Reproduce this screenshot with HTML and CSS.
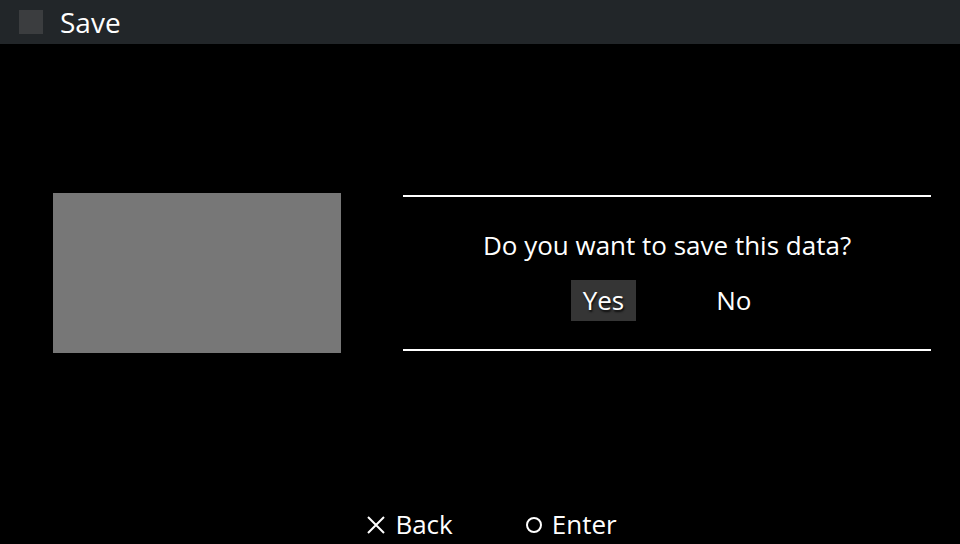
FILE: index.html
```html
<!DOCTYPE html>
<html>

<head>
    <meta charset="UTF-8">
    <meta name="viewport" content="width=device-width, initial-scale=1.0">
    <title>Save</title>
    <link rel="stylesheet" href="styles.css">
</head>

<body>
    <div class="header">
        <span class="header-icon"></span>
        <span class="header-title">Save</span>
    </div>

    <div class="content">
        <div class="thumbnail"></div>

        <div class="dialog">
            <div class="question">Do you want to save this data?</div>
            <div class="choices">
                <span class="choice selected">Yes</span>
                <span class="choice">No</span>
            </div>
        </div>
    </div>

    <div class="footer">
        <span class="hint">
            <svg class="glyph" width="20" height="20" viewBox="0 0 20 20">
                <path d="M2 2 L18 18 M18 2 L2 18" stroke="#fff" stroke-width="2" fill="none" />
            </svg>
            Back
        </span>
        <span class="hint">
            <svg class="glyph" width="18" height="18" viewBox="0 0 18 18">
                <circle cx="9" cy="9" r="7" stroke="#fff" stroke-width="2" fill="none" />
            </svg>
            Enter
        </span>
    </div>
</body>

</html>
```

FILE: styles.css
```css
html, body {
    height: 100%;
}

body {
    margin: 0;
    padding: 0;
    background-color: #000;
    color: #fff;
    font-family: 'Open Sans', 'DejaVu Sans', sans-serif;
    display: flex;
    flex-direction: column;
    overflow: hidden;
}

.header {
    height: 44px;
    background-color: #222629;
    display: flex;
    align-items: center;
    padding-left: 19px;
}

.header-icon {
    width: 24px;
    height: 24px;
    background-color: #3b3d3f;
    margin-right: 17px;
}

.header-title {
    font-size: 28px;
    line-height: 44px;
}

.content {
    display: flex;
    align-items: center;
    padding-top: 149px;
    padding-left: 53px;
    gap: 62px;
}

.thumbnail {
    width: 288px;
    height: 160px;
    background-color: #777;
}

.dialog {
    width: 528px;
    height: 152px;
    border-top: 2px solid #fff;
    border-bottom: 2px solid #fff;
    display: flex;
    flex-direction: column;
    align-items: center;
}

.question {
    font-size: 26px;
    margin-top: 30px;
    line-height: 36px;
}

.choices {
    display: flex;
    gap: 68px;
    margin-top: 17px;
}

.choice {
    font-size: 26px;
    line-height: 41px;
    padding: 0 12px;
}

.choice.selected {
    background-color: #353535;
    text-shadow: 1px 2px 2px rgba(0, 0, 0, 0.8);
}

.footer {
    margin-top: auto;
    display: flex;
    justify-content: center;
    gap: 72px;
    padding-left: 23px;
    height: 40px;
    font-size: 26px;
    line-height: 46px;
}

.hint {
    display: flex;
    align-items: center;
    gap: 9px;
}

.glyph {
    margin-top: 2px;
}
```
